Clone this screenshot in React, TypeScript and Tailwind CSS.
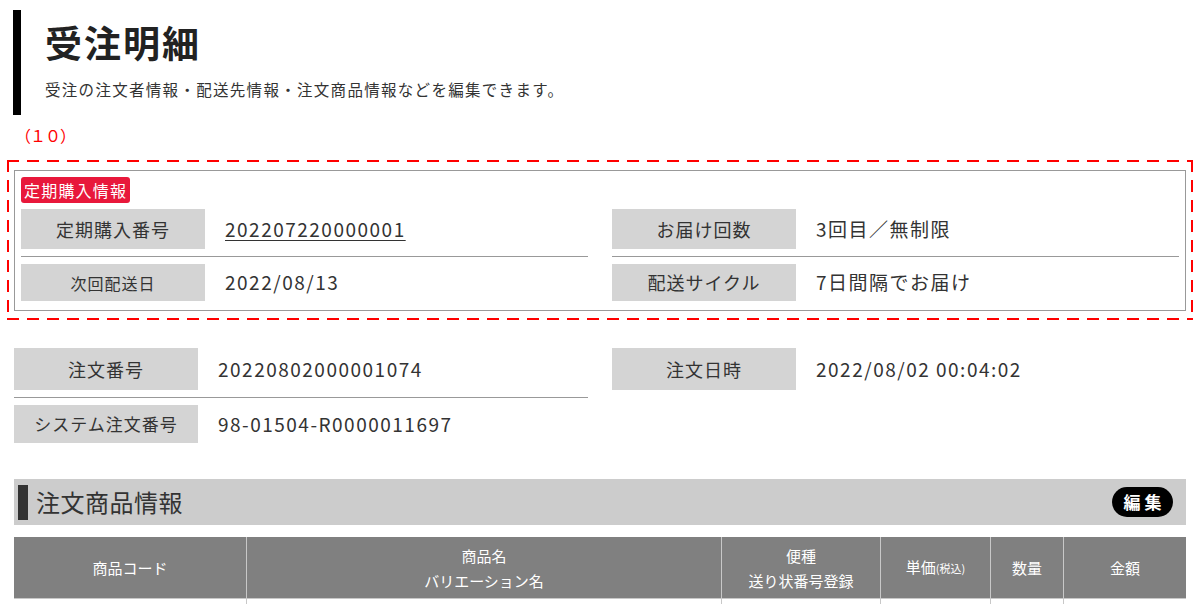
import React from "react";

const font = "font-['Noto_Sans_CJK_JP','Noto_Sans',sans-serif]";

function InfoRow({
  label,
  value,
  labelH,
  link,
  labelSize = "text-[18px]",
  last,
}: {
  label: string;
  value: string;
  labelH: string;
  link?: boolean;
  labelSize?: string;
  last?: boolean;
}) {
  return (
    <div className={`flex items-center ${last ? "" : "border-b border-[#999] pb-[7px] mb-[7px]"}`}>
      <div
        className={`w-[184px] ${labelH} shrink-0 bg-[#d4d4d4] flex items-center justify-center ${labelSize} tracking-[1px] text-[#333]`}
      >
        {label}
      </div>
      <div className={`pl-[20px] text-[19px] tracking-[1.5px] text-[#333] ${link ? "underline underline-offset-[3px]" : ""}`}>
        {value}
      </div>
    </div>
  );
}

export default function App() {
  const cols = [
    { w: "w-[232px]", lines: ["商品コード"] },
    { w: "w-[475px]", lines: ["商品名", "バリエーション名"] },
    { w: "w-[159px]", lines: ["便種", "送り状番号登録"] },
    { w: "w-[110px]", lines: ["単価"], small: "(税込)" },
    { w: "w-[73px]", lines: ["数量"] },
    { w: "w-[123px]", lines: ["金額"] },
  ];

  return (
    <div className={`w-[1200px] h-[604px] overflow-hidden bg-white text-[#333] ${font}`}>
      {/* page heading */}
      <div className="ml-[13px] mt-[10px] h-[105px] border-l-[8px] border-black pl-[24px] pt-[8px]">
        <h1 className="text-[37px] leading-[48px] font-bold tracking-[2px] text-[#222]">受注明細</h1>
        <p className="mt-[13px] text-[15.5px] leading-[20px] tracking-[1.3px] text-[#333]">
          受注の注文者情報・配送先情報・注文商品情報などを編集できます。
        </p>
      </div>

      <div className="pl-[15px] mt-[10px] text-[16px] leading-[20px] text-[#ff0000] tracking-[-1px]">（１０）</div>

      {/* subscription info */}
      <div className="mx-[7px] mt-[15px] px-[7px] pt-[10px] pb-[9px] bg-no-repeat bg-[image:repeating-linear-gradient(90deg,#f00_0_12px,transparent_12px_20px),repeating-linear-gradient(90deg,#f00_0_12px,transparent_12px_20px),repeating-linear-gradient(180deg,#f00_0_12px,transparent_12px_20px),repeating-linear-gradient(180deg,#f00_0_12px,transparent_12px_20px)] bg-[length:100%_2px,100%_2px,2px_100%,2px_100%] bg-[position:0_0,0_100%,0_0,100%_0]">
        <div className="border border-[#999] px-[6px] pt-[6px] pb-[9px]">
          <div className="inline-flex h-[26px] items-center rounded-[3px] bg-[#e8183b] px-[3px] text-[16px] tracking-[1.2px] text-white">
            定期購入情報
          </div>
          <div className="mt-[6px] flex gap-[24px]">
            <div className="w-[567px]">
              <InfoRow label="定期購入番号" value="202207220000001" labelH="h-[40px]" link />
              <InfoRow label="次回配送日" value="2022/08/13" labelH="h-[37px]" labelSize="text-[16px]" last />
            </div>
            <div className="w-[567px]">
              <InfoRow label="お届け回数" value="3回目／無制限" labelH="h-[40px]" />
              <InfoRow label="配送サイクル" value="7日間隔でお届け" labelH="h-[37px]" last />
            </div>
          </div>
        </div>
      </div>

      {/* order info */}
      <div className="mx-[14px] mt-[28px] flex gap-[24px]">
        <div className="w-[574px]">
          <InfoRow label="注文番号" value="20220802000001074" labelH="h-[42px]" />
          <InfoRow label="システム注文番号" value="98-01504-R0000011697" labelH="h-[38px]" labelSize="text-[17px]" last />
        </div>
        <div className="w-[574px]">
          <InfoRow label="注文日時" value="2022/08/02 00:04:02" labelH="h-[42px]" last />
        </div>
      </div>

      {/* section heading */}
      <div className="mx-[14px] mt-[36px] h-[46px] bg-[#cccccc] flex items-center pl-[4px] pr-[13px]">
        <div className="w-[10px] h-[35px] bg-[#333]" />
        <div className="ml-[8px] text-[24px] tracking-[0.5px] text-[#333]">注文商品情報</div>
        <button className="ml-auto h-[30px] w-[61px] rounded-full bg-black text-white text-[17px] font-bold tracking-[4px] pl-[4px]">
          編集
        </button>
      </div>

      {/* table */}
      <div className="mx-[14px] mt-[12px]">
        <div className="flex bg-[#808080] h-[61px]">
          {cols.map((c, i) => (
            <div
              key={i}
              className={`${c.w} flex flex-col items-center justify-center text-white text-[15px] leading-[25px] ${i > 0 ? "border-l border-[#c8c8c8]" : ""}`}
            >
              {c.lines.map((l) => (
                <div key={l}>
                  {l}
                  {c.small && <span className="text-[11px]">{c.small}</span>}
                </div>
              ))}
            </div>
          ))}
        </div>
        <div className="flex h-[60px] border-t border-[#c8c8c8]">
          {cols.map((c, i) => (
            <div key={i} className={`${c.w} ${i > 0 ? "border-l border-[#c8c8c8]" : ""}`} />
          ))}
        </div>
      </div>
    </div>
  );
}
